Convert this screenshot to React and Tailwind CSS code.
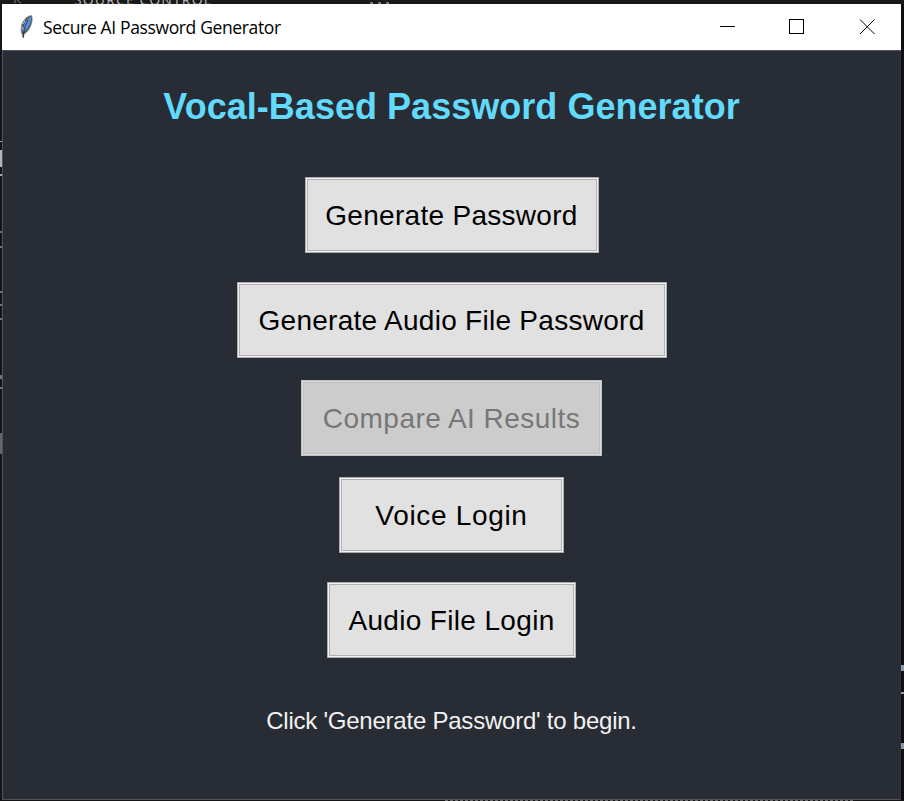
const buttons = [
  { label: 'Generate Password', box: 'w-[294px] mb-[29px]', text: 'tracking-[0.29px]' },
  { label: 'Generate Audio File Password', box: 'w-[430px] mb-[22px]', text: 'tracking-[0.28px]' },
  { label: 'Compare AI Results', box: 'w-[301px] mb-[21px]', text: 'tracking-[0.46px]', disabled: true },
  { label: 'Voice Login', box: 'w-[225px] mb-[29px]', text: 'tracking-[0.68px]' },
  { label: 'Audio File Login', box: 'w-[249px]', text: 'tracking-[0.34px]' },
];

function Feather() {
  return (
    <svg width="16" height="26" viewBox="0 0 16 26" className="ml-4 shrink-0">
      <path d="M13.5 1.5C8.5 2 4.5 7 3.3 12.5C2.8 15.5 3 18 4.2 20.3L5.2 24L6.2 20C10.5 17.5 13.2 12 14 7.5C14.4 5 14.2 3 13.5 1.5Z" fill="#4a525c" stroke="#8c8c8c" strokeWidth=".8" />
      <path d="M12.8 3C8.5 5 6.2 9.5 4.8 15.5L5 18.5C9.5 15.5 12.6 10 13.2 4.5Z" fill="#5795dc" />
      <path d="M10.5 6C8 9.5 6 14 5.2 23.5" fill="none" stroke="#1b2c42" strokeWidth=".9" />
      <path d="M4 12.5L4.3 16M7 6.5L5.3 10" stroke="#b7c2ce" strokeWidth="1" />
    </svg>
  );
}

function TitleBar() {
  return (
    <header className="flex h-[46px] shrink-0 items-center bg-white">
      <Feather />
      <span className="ml-[9px] whitespace-nowrap font-['Open_Sans','Noto_Sans',sans-serif] text-[17.5px] tracking-[-0.36px] text-black">
        Secure AI Password Generator
      </span>
      <svg width="156" height="16" viewBox="0 0 156 16" className="mr-[26px] ml-auto shrink-0" fill="none" stroke="#000" shapeRendering="crispEdges">
        <path d="M1 7.5H16" />
        <rect x="70.5" y=".5" width="14" height="14" />
        <path d="M141 .5L155.5 15M155.5 .5L141 15" shapeRendering="auto" />
      </svg>
    </header>
  );
}

function TkButton({ label, box, text, disabled }) {
  return (
    <button
      disabled={disabled}
      className={`${box} h-[76px] shrink-0 border p-px ${disabled ? 'border-[#bfc0c2] bg-[#dcdcdc] text-[#777777]' : 'border-[#a9abae] bg-[#f4f4f4] text-black'}`}
    >
      <span className={`${text} flex h-full items-center justify-center whitespace-nowrap border pt-[2px] text-[28px] leading-none ${disabled ? 'border-[#c0c0c0] bg-[#cccccc]' : 'border-[#b1b1b1] bg-[#e1e1e1]'}`}>
        {label}
      </span>
    </button>
  );
}

export default function App() {
  return (
    <div className="flex h-[801px] w-[904px] flex-col overflow-hidden bg-[#151515] font-['Liberation_Sans',Arial,sans-serif]">
      <div className="flex h-1 shrink-0 overflow-hidden bg-[#191919] text-[#b0b0b0]">
        <svg width="12" height="4" viewBox="0 0 12 4" className="ml-[12px] shrink-0" fill="none" stroke="#8a8078">
          <path d="M3 0V3M5 0L9 3" />
        </svg>
        <span className="-mt-[8px] ml-[50px] w-[296px] font-['Noto_Sans',sans-serif] text-[14px] leading-[16px] tracking-[1.1px]">SOURCE CONTROL</span>
        <span className="flex gap-[5px] pt-[2px]">
          <i className="size-[3px] bg-[#777777]" />
          <i className="size-[3px] bg-[#777777]" />
          <i className="size-[3px] bg-[#777777]" />
        </span>
      </div>
      <div className="flex h-[796px] shrink-0">
        <div className="flex w-[2px] shrink-0 flex-col bg-[#151515]">
          <i className="mt-[137px] h-px bg-[#aaaaaa]" />
          <i className="mt-[8px] h-[17px] bg-[#b5b5b5]" />
          <i className="mt-[7px] h-[2px] bg-[#aaaaaa]" />
          <i className="mt-[55px] h-[2px] bg-[#777777]" />
          <i className="mt-[13px] h-[2px] bg-[#777777]" />
          <i className="mt-[43px] h-[2px] bg-[#777777]" />
          <i className="mt-[11px] h-[2px] bg-[#777777]" />
          <i className="mt-[12px] h-[2px] bg-[#777777]" />
          <i className="mt-[55px] h-[4px] bg-[#777777]" />
          <i className="mt-[8px] h-[2px] bg-[#777777]" />
          <i className="mt-[44px] h-[21px] bg-[#666666]" />
        </div>
        <div className="flex w-[899px] flex-col">
          <TitleBar />
          <main className="flex grow flex-col items-center border border-[#505359] border-r-[#303338] bg-[#282c34]">
            <h1 className="mt-[35px] whitespace-nowrap text-[36px] leading-[42px] font-bold tracking-[0.03px] text-[#61dafb]">
              Vocal-Based Password Generator
            </h1>
            <div className="mt-[49px] flex flex-col items-center">
              {buttons.map((b) => <TkButton key={b.label} {...b} />)}
            </div>
            <p className="mt-[49px] whitespace-nowrap text-[24px] leading-[28px] tracking-[-0.23px] text-[#f2f2f2]">
              Click 'Generate Password' to begin.
            </p>
          </main>
        </div>
        <div className="flex grow flex-col bg-[#0e0e0e]">
          <i className="mt-[661px] h-[6px] bg-[#8b9ba3]" />
          <i className="mt-[21px] h-[2px] bg-[#999999]" />
          <i className="mt-[49px] h-[6px] bg-[#8b9ba3]" />
        </div>
      </div>
      <div className="ml-[445px] h-px w-[408px] overflow-hidden border-t border-dashed border-[#686868]" />
    </div>
  );
}
